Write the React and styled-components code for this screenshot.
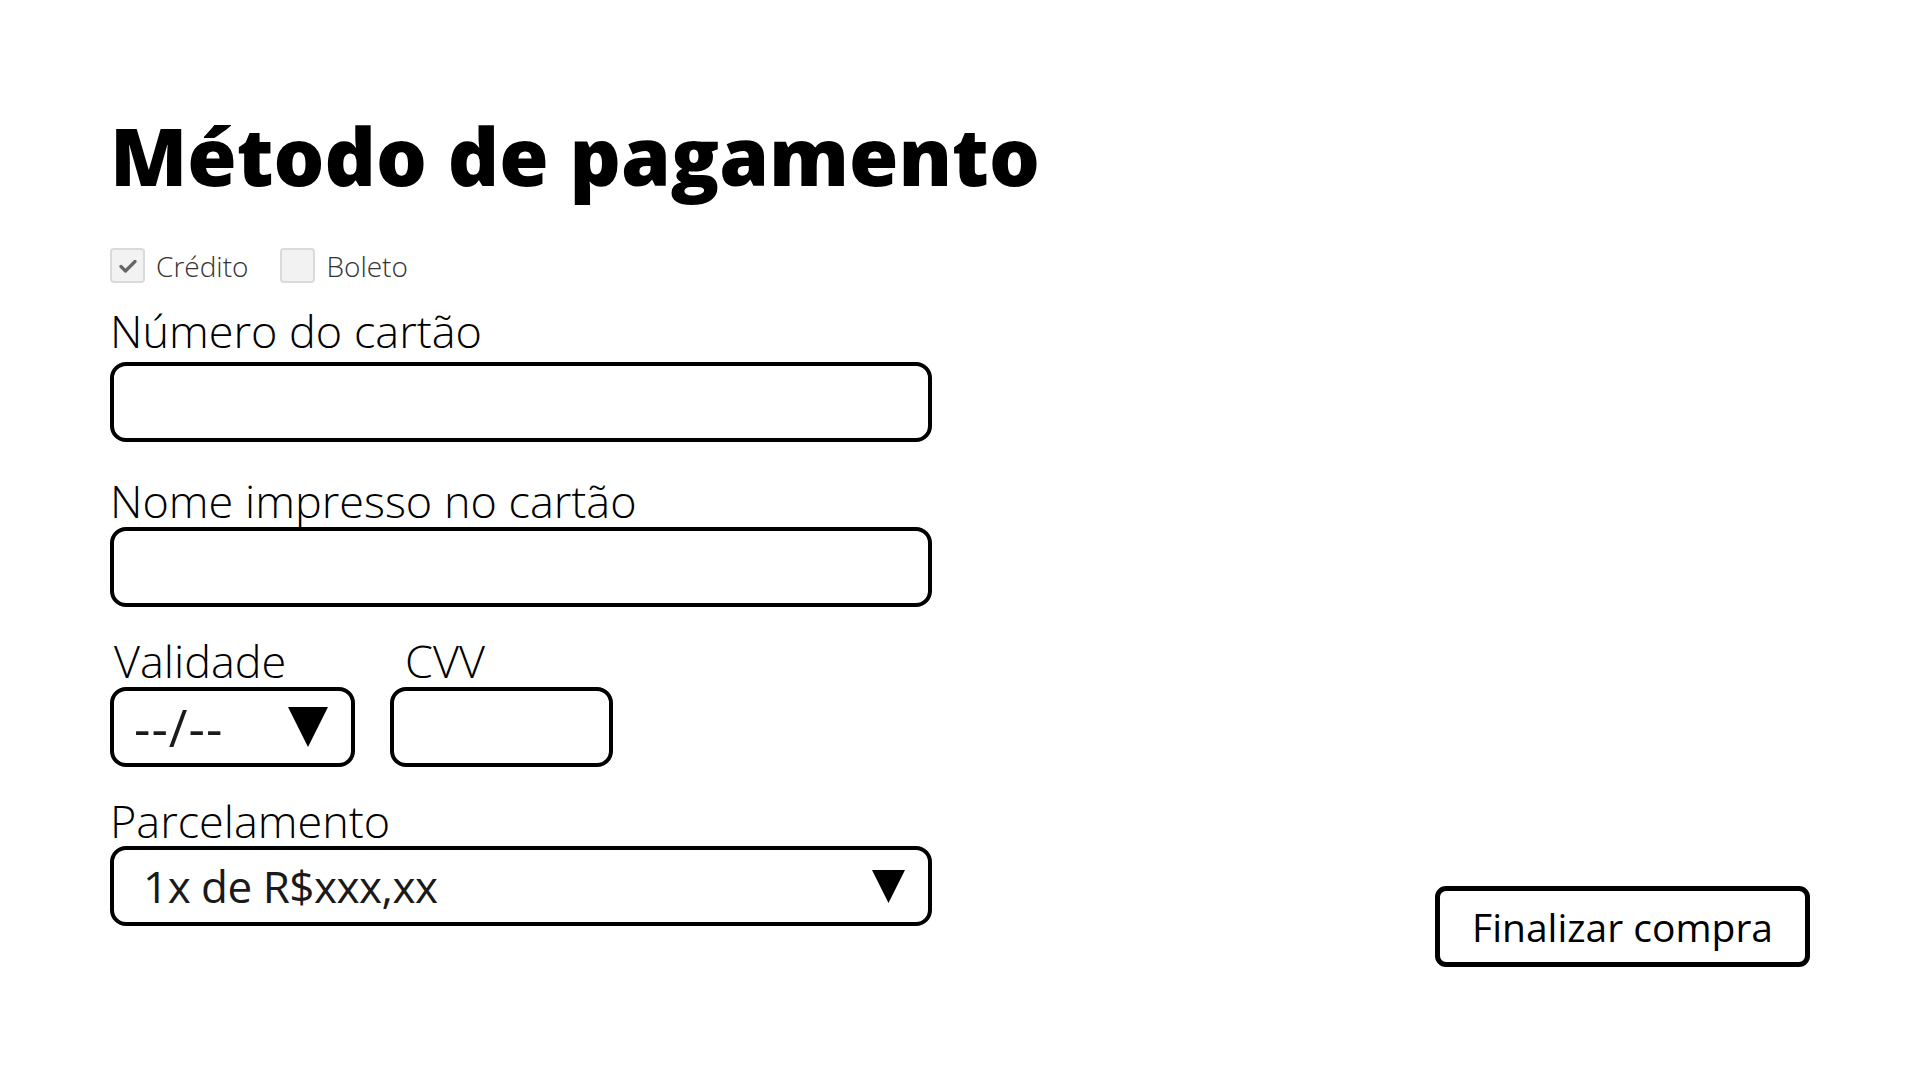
import React from "react"
import styled, { createGlobalStyle } from "styled-components"

const GlobalStyle = createGlobalStyle`
  html, body {
    margin: 0;
    padding: 0;
    background: #ffffff;
  }
  body {
    font-family: "Open Sans", "Liberation Sans", sans-serif;
    color: #000;
  }
  * {
    box-sizing: border-box;
  }
`

const Page = styled.div`
  width: 1920px;
  height: 1080px;
  padding: 115px 110px 0 110px;
  display: flex;
  flex-direction: column;
`

const Title = styled.h1`
  margin: 0;
  font-size: 80px;
  line-height: 1;
  font-weight: 800;
  color: #000;
`

const Body = styled.div`
  display: flex;
  justify-content: space-between;
  align-items: flex-end;
`

const Form = styled.div`
  width: 822px;
  display: flex;
  flex-direction: column;
  padding-bottom: 41px;
`

const MethodRow = styled.div`
  display: flex;
  align-items: center;
  gap: 32px;
  margin-top: 53px;
  height: 35px;
`

const Method = styled.label`
  display: flex;
  align-items: center;
  gap: 11px;
  font-size: 28px;
  font-weight: 300;
  color: #333;
  line-height: 1;
`

const Box = styled.span`
  width: 35px;
  height: 35px;
  border: 2px solid #dadada;
  border-radius: 4px;
  background: #f2f2f2;
  display: flex;
  align-items: center;
  justify-content: center;
`

const Field = styled.div`
  display: flex;
  flex-direction: column;
  gap: ${props => props.$gap || 4}px;
  margin-top: ${props => props.$top || 0}px;
  width: ${props => (props.$width ? `${props.$width}px` : "auto")};
`

const Label = styled.div`
  font-size: 45px;
  font-weight: 300;
  line-height: 1;
  color: #000;
  padding-left: ${props => props.$indent || 0}px;
`

const Input = styled.div`
  height: 80px;
  border: 4px solid #000;
  border-radius: 16px;
  background: #fff;
`

const Select = styled.div`
  height: 80px;
  border: 4px solid #000;
  border-radius: 16px;
  background: #fff;
  display: flex;
  align-items: center;
  justify-content: space-between;
  padding: 0 23px 0 ${props => props.$pad || 24}px;
`

const SelectText = styled.span`
  font-size: ${props => props.$size || 44}px;
  letter-spacing: ${props => props.$spacing || 0}px;
  color: #1a1a1a;
  line-height: 1;
`

const Row = styled.div`
  display: flex;
  gap: 35px;
  margin-top: 31px;
`

const Button = styled.button`
  width: 375px;
  height: 81px;
  border: 5px solid #000;
  border-radius: 11px;
  background: #fff;
  font-family: "Open Sans", "Liberation Sans", sans-serif;
  font-size: 39px;
  color: #000;
  padding: 0;
  cursor: pointer;
`

const Check = () => (
  <svg width="18" height="14" viewBox="0 0 18 14">
    <path d="M2 7.5 L6.5 12 L16 2.5" fill="none" stroke="#666" strokeWidth="3.2" strokeLinecap="round" strokeLinejoin="round" />
  </svg>
)

const Arrow = ({ size }) => (
  <svg width={size} height={size} viewBox="0 0 40 40">
    <polygon points="0,0 40,0 20,40" fill="#000" />
  </svg>
)

const App = () => {
  return (
    <>
      <GlobalStyle />
      <Page>
        <Title>Método de pagamento</Title>
        <Body>
          <Form>
            <MethodRow>
              <Method>
                <Box>
                  <Check />
                </Box>
                Crédito
              </Method>
              <Method>
                <Box />
                Boleto
              </Method>
            </MethodRow>

            <Field $top={25} $gap={9}>
              <Label>Número do cartão</Label>
              <Input />
            </Field>

            <Field $top={36} $gap={4}>
              <Label>Nome impresso no cartão</Label>
              <Input />
            </Field>

            <Row>
              <Field $width={245}>
                <Label $indent={4}>Validade</Label>
                <Select $pad={20}>
                  <SelectText $size={51} $spacing={1}>--/--</SelectText>
                  <Arrow size={40} />
                </Select>
              </Field>
              <Field $width={223}>
                <Label $indent={15}>CVV</Label>
                <Input />
              </Field>
            </Row>

            <Field $top={31} $gap={3}>
              <Label>Parcelamento</Label>
              <Select $pad={29}>
                <SelectText $size={44} $spacing={-0.5}>1x de R$xxx,xx</SelectText>
                <Arrow size={33} />
              </Select>
            </Field>
          </Form>
          <Button>Finalizar compra</Button>
        </Body>
      </Page>
    </>
  )
}

export default App
